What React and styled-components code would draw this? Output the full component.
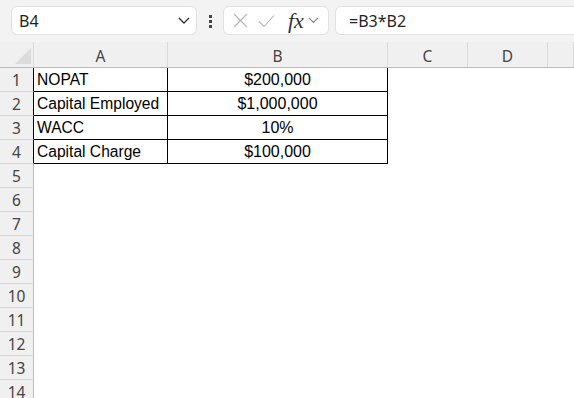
import React from 'react';
import styled, { createGlobalStyle } from 'styled-components';

const GlobalStyle = createGlobalStyle`
  html, body {
    margin: 0;
    padding: 0;
    background: #ffffff;
    overflow: hidden;
  }
  body {
    font-family: "Noto Sans", "Liberation Sans", sans-serif;
  }
`;

const Page = styled.div`
  width: 574px;
  height: 398px;
  overflow: hidden;
  background: #fff;
`;

const Toolbar = styled.div`
  display: flex;
  align-items: flex-start;
  height: 42px;
  padding: 6px 0 0 11px;
  box-sizing: border-box;
  background: #f3f3f3;
`;

const NameBox = styled.div`
  display: flex;
  align-items: center;
  justify-content: space-between;
  width: 186px;
  height: 29px;
  box-sizing: border-box;
  padding: 0 6px 0 7px;
  background: #fff;
  border: 1px solid #e1e1e1;
  border-radius: 6px;
  font-size: 16px;
  color: #1f1f1f;
`;

const Dots = styled.div`
  display: flex;
  flex-direction: column;
  gap: 2px;
  width: 26px;
  align-items: center;
  padding-top: 9px;
  span {
    width: 3px;
    height: 3px;
    background: #444;
  }
`;

const FxBox = styled.div`
  display: flex;
  align-items: center;
  width: 106px;
  height: 29px;
  box-sizing: border-box;
  padding: 0 6px 0 9px;
  background: #fff;
  border: 1px solid #e1e1e1;
  border-radius: 6px;
  gap: 10px;
`;

const Fx = styled.span`
  font-family: "Liberation Serif", serif;
  font-style: italic;
  font-size: 22px;
  color: #333;
  margin-left: 3px;
  margin-right: -6px;
  line-height: 1;
`;

const FormulaBar = styled.div`
  display: flex;
  align-items: center;
  margin-left: 6px;
  flex: 1;
  height: 29px;
  box-sizing: border-box;
  padding-left: 13px;
  background: #fff;
  border: 1px solid #e1e1e1;
  border-right: none;
  border-radius: 6px 0 0 6px;
  font-size: 16px;
  color: #1f1f1f;
`;

const Row = styled.div`
  display: flex;
  height: 24px;
`;

const HeaderRow = styled(Row)`
  height: 25px;
  background: #f0f0f0;
  border-bottom: 1px solid #bcbcbc;
`;

const Corner = styled.div`
  position: relative;
  width: 34px;
  flex: none;
  box-sizing: border-box;
  border-right: 1px solid #d9d9d9;
  &::after {
    content: '';
    position: absolute;
    right: 2px;
    bottom: 3px;
    width: 0;
    height: 0;
    border-left: 16px solid transparent;
    border-bottom: 16px solid #dcdcdc;
  }
`;

const ColHead = styled.div`
  width: ${p => p.$w}px;
  flex: ${p => (p.$w ? 'none' : '1')};
  box-sizing: border-box;
  border-right: 1px solid #d9d9d9;
  display: flex;
  align-items: center;
  justify-content: center;
  font-size: 15.5px;
  color: #444;
  padding-top: 2px;
`;

const RowHead = styled.div`
  width: 34px;
  flex: none;
  box-sizing: border-box;
  background: #f0f0f0;
  border-right: 1px solid ${p => (p.$dark ? '#000' : '#bcbcbc')};
  border-bottom: 1px solid #d6d6d6;
  display: flex;
  align-items: center;
  justify-content: center;
  font-size: 15.5px;
  color: #444;
`;

const Cell = styled.div`
  width: ${p => p.$w}px;
  flex: ${p => (p.$w ? 'none' : '1')};
  box-sizing: border-box;
  display: flex;
  align-items: center;
  justify-content: ${p => (p.$center ? 'center' : 'flex-start')};
  padding-left: ${p => (p.$center ? 0 : 3)}px;
  border-right: 1px solid ${p => (p.$boxed ? '#000' : 'transparent')};
  border-bottom: 1px solid ${p => (p.$boxed ? '#000' : 'transparent')};
  font-family: "Liberation Sans", Arial, sans-serif;
  font-size: ${p => (p.$center ? 16 : 15.6)}px;
  color: #000;
`;

const Chevron = ({ size = 12, color = '#333' }) => (
  <svg width={size} height={size * 0.6} viewBox="0 0 10 6">
    <path d="M0.8 0.8 L5 5 L9.2 0.8" fill="none" stroke={color} strokeWidth="1.1" />
  </svg>
);

const cols = [
  { name: 'A', w: 134 },
  { name: 'B', w: 220 },
  { name: 'C', w: 80 },
  { name: 'D', w: 80 },
  { name: '', w: 0 },
];

const data = [
  ['NOPAT', '$200,000'],
  ['Capital Employed', '$1,000,000'],
  ['WACC', '10%'],
  ['Capital Charge', '$100,000'],
];

export default function App() {
  const rows = Array.from({ length: 14 }, (_, i) => i + 1);
  return (
    <Page>
      <GlobalStyle />
      <Toolbar>
        <NameBox>
          B4
          <Chevron size={12} color="#333" />
        </NameBox>
        <Dots>
          <span />
          <span />
          <span />
        </Dots>
        <FxBox>
          <svg width="15" height="15" viewBox="0 0 15 15">
            <path d="M1 1 L14 14 M14 1 L1 14" stroke="#b5b5b5" strokeWidth="1.1" fill="none" />
          </svg>
          <svg width="17" height="14" viewBox="0 0 17 14">
            <path d="M1 7.5 L6 12.5 L16 1.5" stroke="#b5b5b5" strokeWidth="1.1" fill="none" />
          </svg>
          <Fx>fx</Fx>
          <Chevron size={11} color="#888" />
        </FxBox>
        <FormulaBar>=B3*B2</FormulaBar>
      </Toolbar>
      <HeaderRow>
        <Corner />
        {cols.map((c, i) => (
          <ColHead key={i} $w={c.w}>{c.name}</ColHead>
        ))}
      </HeaderRow>
      {rows.map(r => {
        const d = data[r - 1];
        return (
          <Row key={r}>
            <RowHead $dark={!!d}>{r}</RowHead>
            <Cell $w={134} $boxed={!!d}>{d ? d[0] : ''}</Cell>
            <Cell $w={220} $boxed={!!d} $center>{d ? d[1] : ''}</Cell>
            <Cell $w={80} />
            <Cell $w={80} />
            <Cell />
          </Row>
        );
      })}
    </Page>
  );
}
